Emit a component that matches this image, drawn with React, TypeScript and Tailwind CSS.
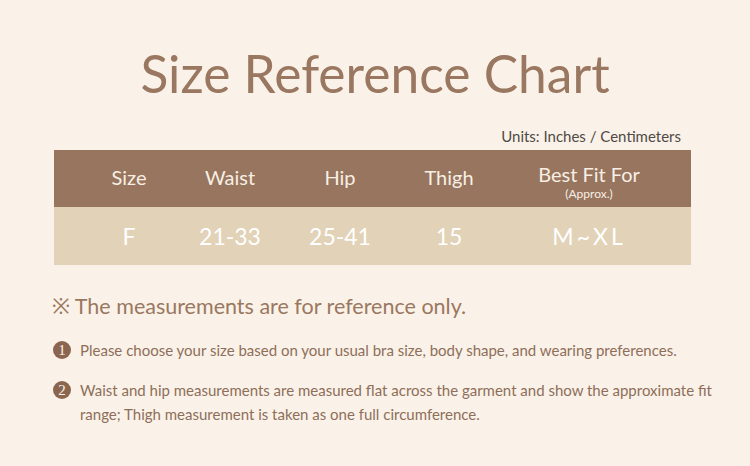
const HEADERS = ['Size', 'Waist', 'Hip', 'Thigh'];
const VALUES = ['F', '21-33', '25-41', '15'];

const NOTES = [
  'Please choose your size based on your usual bra size, body shape, and wearing preferences.',
  'Waist and hip measurements are measured flat across the garment and show the approximate fit range; Thigh measurement is taken as one full circumference.',
];

const COLS = 'grid grid-cols-[100px_102px_118px_100px_180px] pl-[25px]';

export default function App() {
  return (
    <div
      className="h-[466px] w-[750px] overflow-hidden bg-[#faf2e8] text-[#9a7760]"
      style={{fontFamily: 'Lato, "Noto Sans", sans-serif'}}
    >
      <h1 className="pt-[40px] text-center text-[51.5px] leading-[66px] font-normal">Size Reference Chart</h1>

      <div className="mt-[21px] pr-[69px] text-right text-[15px] leading-[18px] text-[#4f4a45]">
        Units: Inches / Centimeters
      </div>

      <div className="mt-[5px] ml-[54px] w-[637px]">
        <div className={`${COLS} h-[57px] items-center bg-[#98755e] text-[#f7efe4]`}>
          {HEADERS.map((h) => (
            <div key={h} className="pb-[4px] text-center text-[20px] leading-none">
              {h}
            </div>
          ))}
          <div className="flex flex-col items-center pt-[6px]">
            <span className="text-[20px] leading-[22px]">Best Fit For</span>
            <span className="mt-[2px] text-[12px] leading-[13px]">(Approx.)</span>
          </div>
        </div>
        <div className={`${COLS} h-[58px] items-center bg-[#e2d2b8] text-white`}>
          {VALUES.map((v) => (
            <div key={v} className="text-center text-[23px] leading-none">
              {v}
            </div>
          ))}
          <div className="text-center text-[23px] leading-none tracking-[3px]">M~XL</div>
        </div>
      </div>

      <div className="mt-[27px] pl-[52px] text-[21.5px] leading-[28px] text-[#9a7760]">
        ※ The measurements are for reference only.
      </div>

      <div className="mt-[18px] flex flex-col gap-[16px] pl-[53px] pr-[36px] text-[15px] leading-[24px] text-[#8e6e5a]">
        {NOTES.map((n, i) => (
          <div key={i} className="flex gap-[9px]">
            <span
              className="mt-[3px] flex h-[18px] w-[18px] shrink-0 items-center justify-center rounded-full bg-[#8a6650] text-[15px] leading-none text-[#faf2e8]"
              style={{fontFamily: '"Liberation Serif", serif'}}
            >
              {i + 1}
            </span>
            <p>{n}</p>
          </div>
        ))}
      </div>
    </div>
  );
}
